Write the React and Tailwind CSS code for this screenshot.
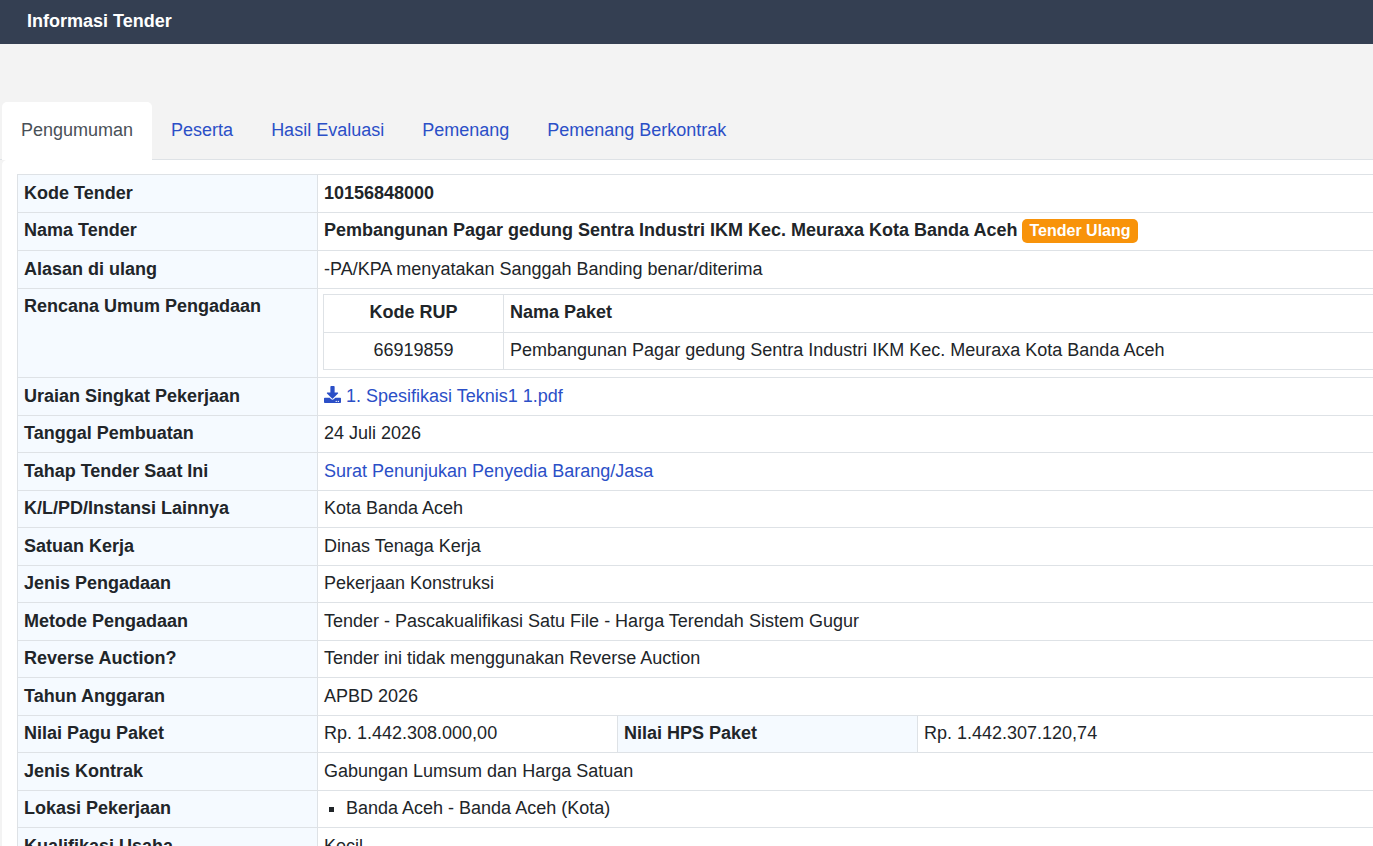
import { FaDownload } from "react-icons/fa";

const tabs = ["Peserta", "Hasil Evaluasi", "Pemenang", "Pemenang Berkontrak"];

const Label = ({ children }) => (
  <th className="border border-[#dee2e6] bg-[#f5faff] px-[6px] pt-[5.25px] pb-[7.25px] text-left align-top font-bold">
    {children}
  </th>
);

const Value = ({ children, className = "", span = 3 }) => (
  <td colSpan={span} className={`border border-[#dee2e6] px-[6px] pt-[5.25px] pb-[7.25px] align-top ${className}`}>
    {children}
  </td>
);

const Row = ({ label, children, className }) => (
  <tr>
    <Label>{label}</Label>
    <Value className={className}>{children}</Value>
  </tr>
);

const App = () => {
  return (
    <div className="h-[846px] w-[1373px] overflow-hidden bg-[#f3f3f3] font-['Liberation_Sans',Arial,sans-serif] text-[18px] leading-[24px] text-[#212529]">
      <div className="flex h-[44px] items-center bg-[#343f52] px-[27px] pb-[2px] text-[18px] font-bold leading-[27px] text-white">
        Informasi Tender
      </div>

      <div className="mt-[58px] flex h-[58px] border-b border-[#dee2e6] pl-[2px] leading-[27px]">
        <div className="flex h-[58px] items-center rounded-t-[5px] bg-white px-[19px] pb-[1px] text-[#495057]">
          Pengumuman
        </div>
        {tabs.map((tab) => (
          <div key={tab} className="flex items-center px-[19px] text-[#2b4fc7]">
            {tab}
          </div>
        ))}
      </div>

      <div className="ml-[2px] w-[1500px] rounded-tl-[5px] bg-white pl-[15px] pt-[14.25px]">
        <table className="w-[1480px] table-fixed border-collapse">
          <colgroup>
            <col className="w-[300px]" />
            <col className="w-[300px]" />
            <col className="w-[300px]" />
            <col />
          </colgroup>
          <tbody>
            <Row label="Kode Tender" className="font-bold">10156848000</Row>
            <Row label="Nama Tender" className="font-bold">
              Pembangunan Pagar gedung Sentra Industri IKM Kec. Meuraxa Kota Banda Aceh{" "}
              <span className="inline-block rounded-[5px] bg-[#f8930a] px-[7px] text-[16px] leading-[24px] text-white">
                Tender Ulang
              </span>
            </Row>
            <Row label="Alasan di ulang">-PA/KPA menyatakan Sanggah Banding benar/diterima</Row>
            <Row label="Rencana Umum Pengadaan">
              <table className="-ml-[1px] w-[1100px] table-fixed border-collapse">
                <tbody>
                  <tr>
                    <th className="w-[180px] border border-[#dee2e6] px-[6px] pt-[5.25px] pb-[7.25px] text-center font-bold">Kode RUP</th>
                    <th className="border border-[#dee2e6] px-[6px] pt-[5.25px] pb-[7.25px] text-left font-bold">Nama Paket</th>
                  </tr>
                  <tr>
                    <td className="border border-[#dee2e6] px-[6px] pt-[5.25px] pb-[7.25px] text-center">66919859</td>
                    <td className="border border-[#dee2e6] px-[6px] pt-[5.25px] pb-[7.25px]">
                      Pembangunan Pagar gedung Sentra Industri IKM Kec. Meuraxa Kota Banda Aceh
                    </td>
                  </tr>
                </tbody>
              </table>
            </Row>
            <Row label="Uraian Singkat Pekerjaan">
              <a className="text-[#2b4fc7]">
                <FaDownload className="mr-[5px] inline-block align-[-1px] text-[17px]" />
                1. Spesifikasi Teknis1 1.pdf
              </a>
            </Row>
            <Row label="Tanggal Pembuatan">24 Juli 2026</Row>
            <Row label="Tahap Tender Saat Ini" className="text-[#2b4fc7]">Surat Penunjukan Penyedia Barang/Jasa</Row>
            <Row label="K/L/PD/Instansi Lainnya">Kota Banda Aceh</Row>
            <Row label="Satuan Kerja">Dinas Tenaga Kerja</Row>
            <Row label="Jenis Pengadaan">Pekerjaan Konstruksi</Row>
            <Row label="Metode Pengadaan">Tender - Pascakualifikasi Satu File - Harga Terendah Sistem Gugur</Row>
            <Row label="Reverse Auction?">Tender ini tidak menggunakan Reverse Auction</Row>
            <Row label="Tahun Anggaran">APBD 2026</Row>
            <tr>
              <Label>Nilai Pagu Paket</Label>
              <Value span={1}>Rp. 1.442.308.000,00</Value>
              <Label>Nilai HPS Paket</Label>
              <Value span={1}>Rp. 1.442.307.120,74</Value>
            </tr>
            <Row label="Jenis Kontrak">Gabungan Lumsum dan Harga Satuan</Row>
            <Row label="Lokasi Pekerjaan">
              <ul className="list-[square] pl-[22px]">
                <li>Banda Aceh - Banda Aceh (Kota)</li>
              </ul>
            </Row>
            <Row label="Kualifikasi Usaha">Kecil</Row>
          </tbody>
        </table>
      </div>
    </div>
  );
};

export default App;
